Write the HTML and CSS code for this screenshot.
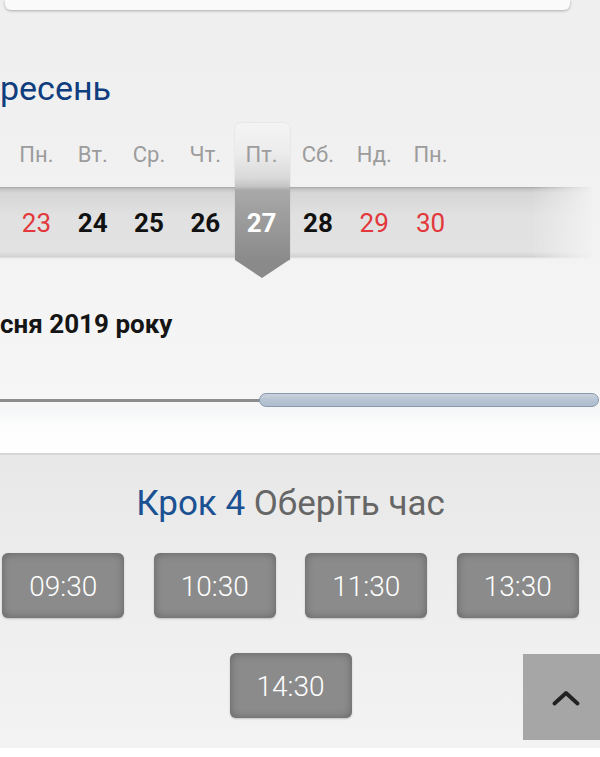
FILE: index.html
```html
<!DOCTYPE html>
<html lang="uk">
<head>
<meta charset="utf-8">
<title>Запис</title>
<link rel="stylesheet" href="styles.css">
</head>
<body>
<div class="top">
  <div class="card"></div>
  <div class="cal">
    <h2 class="month">ресень</h2>
    <div class="days">
      <span class="cell">Пн.</span>
      <span class="cell">Вт.</span>
      <span class="cell">Ср.</span>
      <span class="cell">Чт.</span>
      <span class="cell">Пт.</span>
      <span class="cell">Сб.</span>
      <span class="cell">Нд.</span>
      <span class="cell">Пн.</span>
    </div>
    <div class="strip">
      <span class="cell num red">23</span>
      <span class="cell num">24</span>
      <span class="cell num">25</span>
      <span class="cell num">26</span>
      <span class="cell num active">27</span>
      <span class="cell num">28</span>
      <span class="cell num red">29</span>
      <span class="cell num red">30</span>
    </div>
    <div class="sel"></div>
    <p class="date">сня 2019 року</p>
    <div class="slider">
      <div class="track"></div>
      <div class="thumb"></div>
    </div>
  </div>
  <div class="gap"></div>
</div>
<section class="step">
  <h3 class="step-title"><span class="step-num">Крок 4</span> Оберіть час</h3>
  <div class="times">
    <button class="time">09:30</button>
    <button class="time">10:30</button>
    <button class="time">11:30</button>
    <button class="time">13:30</button>
    <button class="time">14:30</button>
  </div>
</section>
<div class="bottom"></div>
<button class="totop" aria-label="Вгору">
  <svg width="28" height="16" viewBox="0 0 28 16"><path d="M2.5 13.5 L14 3 L25.5 13.5" fill="none" stroke="#222" stroke-width="3.8" stroke-linecap="round" stroke-linejoin="round"/></svg>
</button>
</body>
</html>
```

FILE: styles.css
```css
html { background: #fff; }
body {
  margin: 0;
  width: 600px;
  height: 757px;
  overflow: hidden;
  position: relative;
  font-family: Roboto, "Noto Sans", "Liberation Sans", sans-serif;
}
.top {
  background: linear-gradient(to bottom, #efefef 0, #f0f0f0 120px, #f4f4f4 300px, #f6f6f6 400px);
}
.card {
  margin-left: 5px;
  width: 565px;
  height: 10px;
  background: #fafafa;
  border-radius: 0 0 6px 6px;
  box-shadow: 0 1px 3px rgba(0,0,0,0.28);
}
.cal {
  position: relative;
  padding-top: 58px;
  padding-bottom: 5px;
}
.month {
  margin: 0;
  font-size: 34px;
  line-height: 40px;
  font-weight: 400;
  color: #0f3d7e;
}
.days, .strip {
  display: flex;
  padding-left: 8.3px;
}
.cell {
  width: 56.3px;
  flex: none;
  text-align: center;
  position: relative;
  z-index: 2;
}
.days {
  margin-top: 32px;
  height: 30px;
  line-height: 30px;
  font-size: 22px;
  color: #9c9c9c;
}
.strip {
  position: relative;
  margin-top: 17px;
  height: 72px;
  line-height: 72px;
  font-size: 26px;
}
.strip::before {
  content: "";
  position: absolute;
  left: 0;
  top: 0;
  right: 0;
  bottom: 0;
  z-index: 0;
  background: linear-gradient(to bottom, #a6a6a6 0, #c4c4c4 2px, #d6d6d6 6px, #e1e1e1 40%, #e2e2e2 90%, #d2d2d2 97%, #f6f6f6 100%);
  -webkit-mask-image: linear-gradient(to right, #000 0, #000 532px, transparent 594px);
  mask-image: linear-gradient(to right, #000 0, #000 532px, transparent 594px);
}
.num { font-weight: 700; color: #111; }
.num.red { font-weight: 400; color: #e2373b; }
.num.active { color: #fff; }
.sel {
  position: absolute;
  left: 235px;
  top: 113px;
  width: 55px;
  height: 137px;
  border-radius: 6px 6px 0 0;
  z-index: 1;
  background: linear-gradient(to bottom, #f4f4f4 0%, #ececec 22%, #d9d9d9 40%, #c6c6c6 46%, #a9a9a9 49%, #9c9c9c 70%, #8b8b8b 100%);
  box-shadow: 0 0 2px rgba(0,0,0,0.12);
}
.sel::after {
  content: "";
  position: absolute;
  left: 0;
  top: 137px;
  border-left: 27.5px solid transparent;
  border-right: 27.5px solid transparent;
  border-top: 18px solid #8a8a8a;
}
.date {
  margin: 50px 0 0;
  font-size: 26px;
  line-height: 30px;
  font-weight: 700;
  color: #151515;
}
.slider {
  margin-top: 54px;
  height: 14px;
  display: flex;
  align-items: center;
}
.track {
  width: 262px;
  height: 3px;
  background: #8c8c8c;
  flex: none;
}
.thumb {
  margin-left: -3px;
  width: 340px;
  height: 14px;
  box-sizing: border-box;
  border: 1.5px solid #8898ae;
  border-radius: 7px;
  background: linear-gradient(to bottom, #c9d3de 0, #b7c4d3 50%, #aebccd 100%);
  flex: none;
}
.gap {
  height: 41px;
  background: linear-gradient(to bottom, #f4f6f8 0, #fdfdfd 12px, #fff 100%);
  border-bottom: 2px solid #d6d6d6;
}
.step {
  background: linear-gradient(to bottom, #e8e8e8 0, #eeeeee 150px, #f3f3f3 100%);
  padding: 27px 0 30px;
  width: 600px;
}
.step-title {
  width: 581px;
  margin: 0;
  text-align: center;
  font-size: 35px;
  line-height: 44px;
  font-weight: 400;
  color: #666;
}
.step-num { color: #1a5192; }
.times {
  width: 581px;
  margin-top: 27px;
  display: flex;
  flex-wrap: wrap;
  justify-content: center;
  gap: 35px 29.5px;
}
.time {
  width: 122px;
  height: 65px;
  padding: 2px 0 0;
  border: none;
  border-radius: 6px;
  background: #8b8b8b;
  box-shadow: inset 0 0 8px rgba(0,0,0,0.3), 0 1px 2px rgba(0,0,0,0.2);
  color: #fff;
  font-family: Roboto, "Noto Sans", "Liberation Sans", sans-serif;
  font-size: 28px;
  font-weight: 300;
}
.bottom {
  height: 9px;
  background: #fff;
}
.totop {
  position: absolute;
  right: 0;
  top: 654px;
  width: 77px;
  height: 86px;
  border: none;
  padding: 0;
  background: #a6a6a6;
  display: flex;
  align-items: center;
  justify-content: center;
}
.totop svg { margin-left: 9px; margin-top: 2px; }
```
